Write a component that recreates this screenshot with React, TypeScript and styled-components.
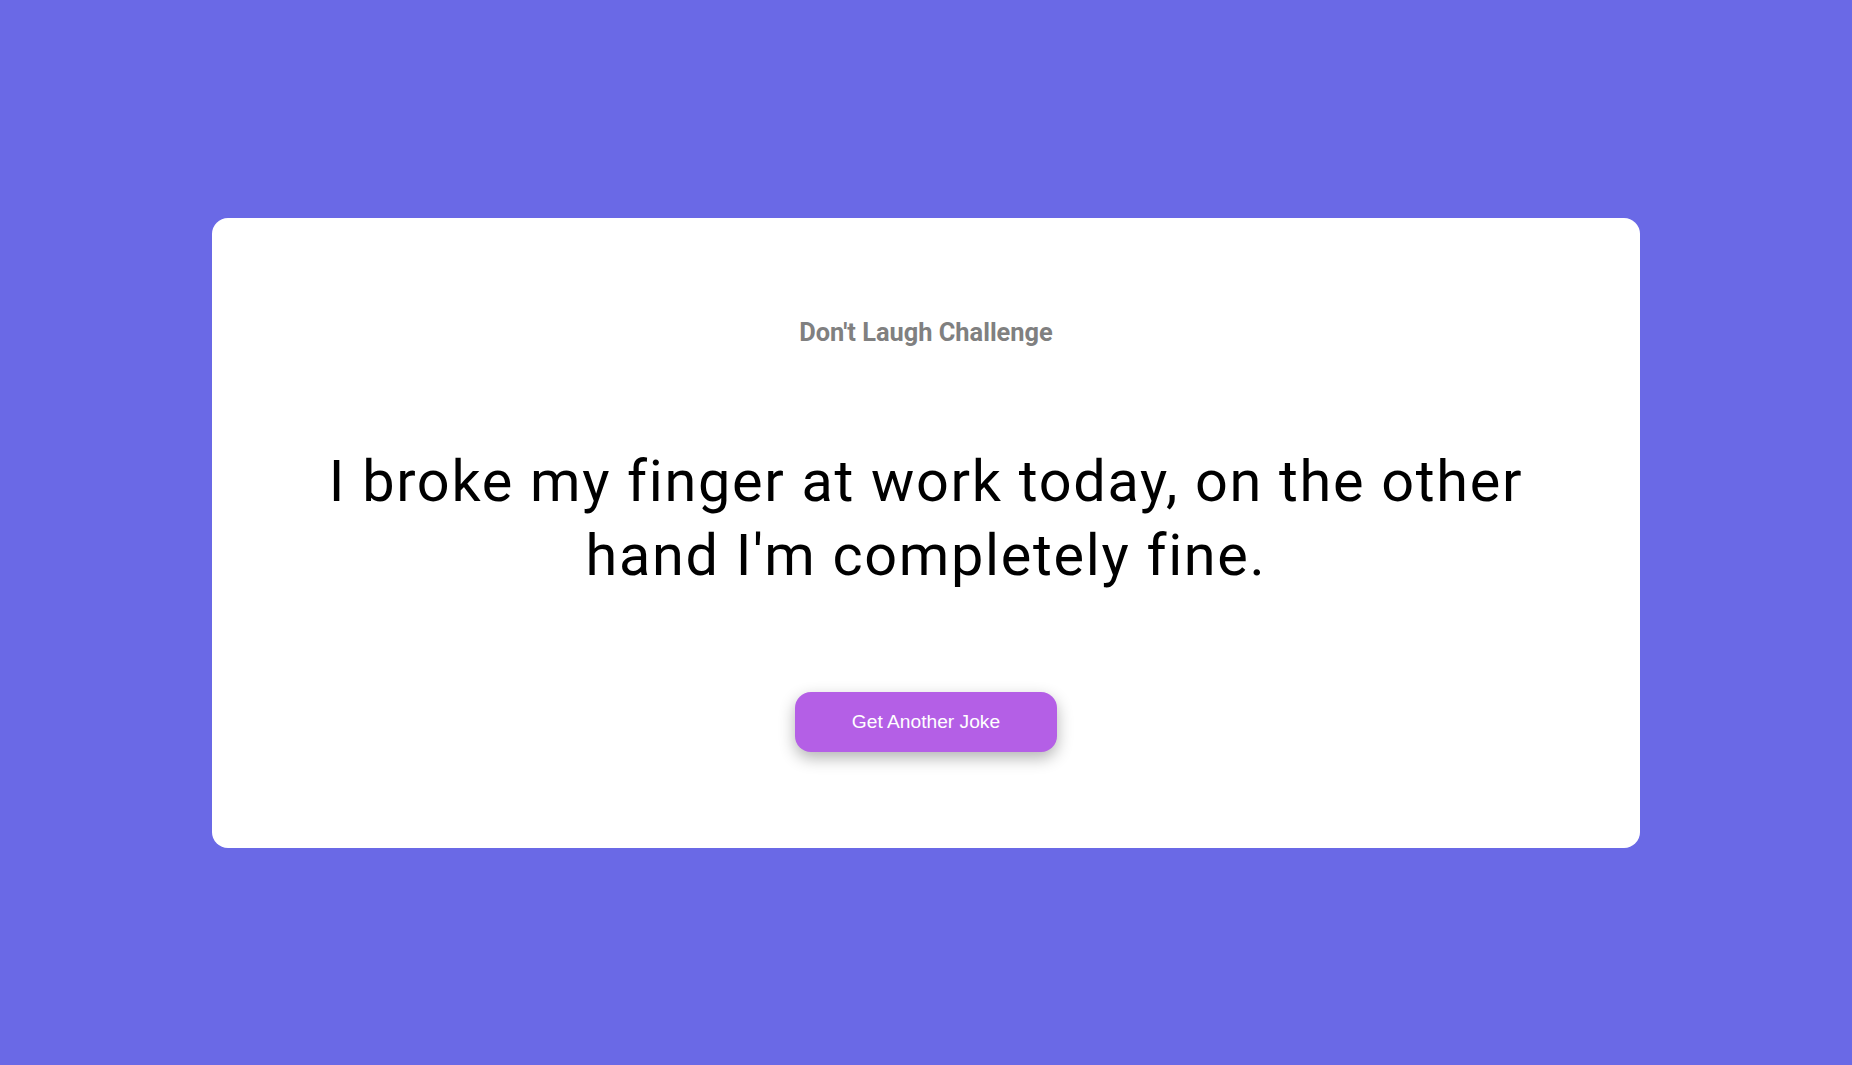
import React from "react";
import styled, { createGlobalStyle } from "styled-components";

const GlobalStyle = createGlobalStyle`
  html, body {
    margin: 0;
    padding: 0;
    background: #6a69e6;
  }
  * { box-sizing: border-box; }
`;

const Page = styled.main`
  width: 100vw;
  height: 100vh;
  display: flex;
  align-items: center;
  justify-content: center;
  background: #6a69e6;
`;

const Card = styled.section`
  width: 1428px;
  height: 630px;
  background: #ffffff;
  border-radius: 16px;
  padding: 99px 80px 95px;
  display: flex;
  flex-direction: column;
  align-items: center;
  gap: 98px;
  text-align: center;
`;

const Title = styled.h3`
  margin: 0;
  font-family: Roboto, "Liberation Sans", sans-serif;
  font-weight: 700;
  font-size: 25.4px;
  line-height: normal;
  color: #808080;
`;

const Joke = styled.p`
  margin: 0;
  font-family: Roboto, "Liberation Sans", sans-serif;
  font-weight: 400;
  font-size: 57.6px;
  line-height: 1.3;
  letter-spacing: 1.7px;
  color: #000000;
`;

const Button = styled.button`
  width: 262px;
  height: 60px;
  border: none;
  border-radius: 16px;
  background: #b45fe6;
  color: #ffffff;
  font-family: "Liberation Sans", Arial, sans-serif;
  font-size: 19.2px;
  box-shadow: 0 6px 16px rgba(0, 0, 0, 0.3);
  cursor: pointer;
  flex-shrink: 0;
`;

export default function App() {
  return (
    <>
      <GlobalStyle />
      <Page>
        <Card>
          <Title>Don't Laugh Challenge</Title>
          <Joke>
            I broke my finger at work today, on the other hand I'm completely fine.
          </Joke>
          <Button>Get Another Joke</Button>
        </Card>
      </Page>
    </>
  );
}
